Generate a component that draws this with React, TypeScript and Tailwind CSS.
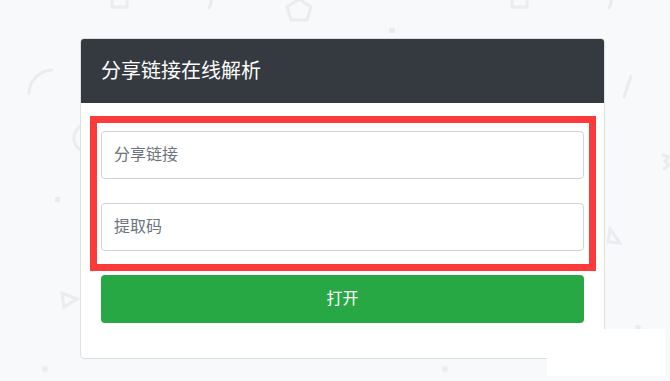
import React from 'react';

// faint decorative shapes scattered over the page background
const Backdrop = () => (
  <svg
    className="absolute inset-0 w-full h-full"
    width="670"
    height="381"
    viewBox="0 0 670 381"
    fill="none"
    stroke="#eaecee"
    strokeWidth="3"
    strokeLinecap="round"
  >
    <rect x="112" y="-10" width="15" height="17" />
    <path d="M211 -2 Q212 4 209 8" />
    <polygon points="299,-1 311,7 307,20 291,20 287,7" />
    <rect x="389" y="28" width="6" height="5" fill="#eaecee" stroke="none" />
    <rect x="512" y="-10" width="15" height="17" />
    <path d="M611 -2 Q612 4 609 8" />
    <path d="M29 93 A24 24 0 0 1 52 70" />
    <path d="M631 76 L624 97" />
    <path d="M663 155 L669 157 L665 161 L669 165 L664 169" />
    <polygon points="610,229 620,243 608,242" />
    <circle cx="88" cy="138" r="14" />
    <rect x="55" y="197" width="5" height="5" fill="#eaecee" stroke="none" />
    <polygon points="62,293 77,299 64,307" />
    <circle cx="45" cy="369" r="3" fill="#eaecee" stroke="none" />
    <circle cx="445" cy="369" r="3" fill="#eaecee" stroke="none" />
    <circle cx="638" cy="328" r="3" fill="#eaecee" stroke="none" />
  </svg>
);

export default function App() {
  return (
    <div className="relative w-full h-[381px] overflow-hidden bg-[#f8f9fa] font-['Liberation_Sans','Noto_Sans_CJK_SC',sans-serif]">
      <Backdrop />

      <div className="relative pl-[80px] pt-[38px]">
        <div className="w-[525px] bg-white border border-[#dfdfdf] rounded">
          {/* Header */}
          <div className="h-[64px] px-5 flex items-center bg-[#343a40] rounded-t-[3px]">
            <h5 className="text-[20px] leading-[24px] text-white">分享链接在线解析</h5>
          </div>

          {/* Form */}
          <div className="px-5 pt-[28px] pb-[35px] flex flex-col gap-6">
            <input
              type="text"
              placeholder="分享链接"
              className="h-[48px] w-full px-3 text-base text-[#495057] placeholder:text-[#6c757d] border border-[#ced4da] rounded outline-none"
            />
            <input
              type="text"
              placeholder="提取码"
              className="h-[48px] w-full px-3 text-base text-[#495057] placeholder:text-[#6c757d] border border-[#ced4da] rounded outline-none"
            />
            <button className="h-[48px] w-full bg-[#28a745] text-white text-base rounded">
              打开
            </button>
          </div>
        </div>
      </div>

      {/* annotation box over the inputs */}
      <div className="absolute left-[90px] top-[116px] w-[506px] h-[155px] border-[7px] border-[#fd3a3a] pointer-events-none" />

      {/* white patch bottom right */}
      <div className="absolute left-[547px] top-[329px] w-[118px] h-[47px] bg-white" />
    </div>
  );
}
